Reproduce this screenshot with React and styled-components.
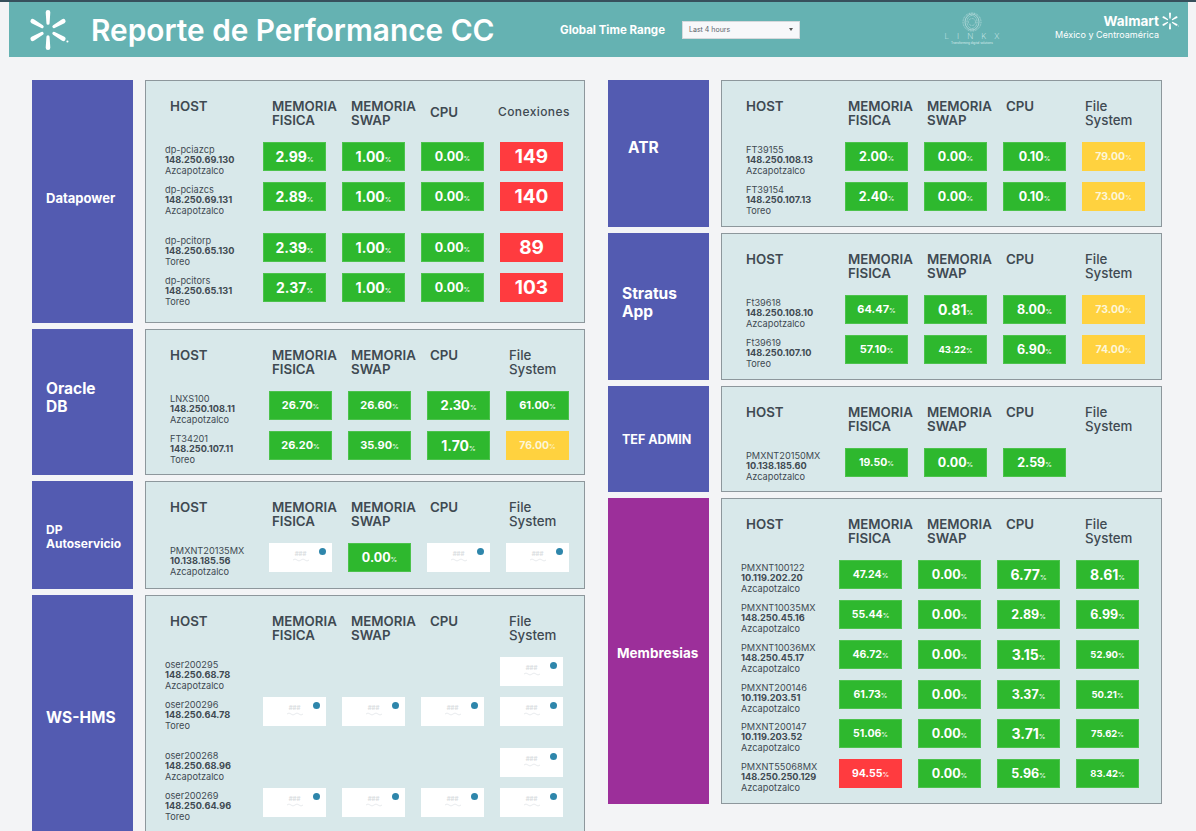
import React from "react"
import styled, { createGlobalStyle } from "styled-components"

const GREEN = "#2eb82e"
const RED = "#ff3b3f"
const YELLOW = "#ffd23f"

const g = (v, size = 14) => ({ v, size, color: GREEN })
const r = (v, size = 19) => ({ v, size, color: RED, raw: true })
const y = (v, size = 10.5) => ({ v, size, color: YELLOW })
const BLANK = { blank: true }
const EMPTY = { empty: true }

const leftSections = [
  {
    label: "Datapower", labelSize: 13, labelLeft: 14, labelShift: -3, height: 243, accent: "#535bb1", last: "Conexiones", wide: true,
    rows: [
      { name: "dp-pciazcp", ip: "148.250.69.130", site: "Azcapotzalco", cells: [g("2.99"), g("1.00"), g("0.00", 12.5), r("149")] },
      { name: "dp-pciazcs", ip: "148.250.69.131", site: "Azcapotzalco", top: 11, cells: [g("2.89"), g("1.00"), g("0.00", 12.5), r("140")] },
      { name: "dp-pcitorp", ip: "148.250.65.130", site: "Toreo", top: 22, cells: [g("2.39"), g("1.00"), g("0.00", 12.5), r("89")] },
      { name: "dp-pcitors", ip: "148.250.65.131", site: "Toreo", top: 11, cells: [g("2.37"), g("1.00"), g("0.00", 12.5), r("103")] },
    ],
  },
  {
    label: "Oracle DB", labelSize: 15.5, labelLeft: 14, labelRight: 30, labelShift: -4, height: 146, accent: "#535bb1",
    rows: [
      { name: "LNXS100", ip: "148.250.108.11", site: "Azcapotzalco", cells: [g("26.70", 11), g("26.60", 11), g("2.30", 13), g("61.00", 11)] },
      { name: "FT34201", ip: "148.250.107.11", site: "Toreo", top: 11, cells: [g("26.20", 11), g("35.90", 11), g("1.70", 14), y("76.00")] },
    ],
  },
  {
    label: "DP Autoservicio", labelSize: 12, labelLeft: 14, labelShift: 2, height: 108, accent: "#535bb1",
    rows: [
      { name: "PMXNT20135MX", ip: "10.138.185.56", site: "Azcapotzalco", cells: [BLANK, g("0.00", 12.5), BLANK, BLANK] },
    ],
  },
  {
    label: "WS-HMS", labelSize: 15.5, labelLeft: 14, labelShift: 0, height: 246, accent: "#535bb1", wide: true,
    rows: [
      { name: "oser200295", ip: "148.250.68.78", site: "Azcapotzalco", cells: [EMPTY, EMPTY, EMPTY, BLANK] },
      { name: "oser200296", ip: "148.250.64.78", site: "Toreo", top: 11, cells: [BLANK, BLANK, BLANK, BLANK] },
      { name: "oser200268", ip: "148.250.68.96", site: "Azcapotzalco", top: 22, cells: [EMPTY, EMPTY, EMPTY, BLANK] },
      { name: "oser200269", ip: "148.250.64.96", site: "Toreo", top: 11, cells: [BLANK, BLANK, BLANK, BLANK] },
    ],
  },
]

const rightSections = [
  {
    label: "ATR", labelSize: 15.5, labelLeft: 20, labelShift: -6, height: 147, accent: "#535bb1",
    rows: [
      { name: "FT39155", ip: "148.250.108.13", site: "Azcapotzalco", cells: [g("2.00", 12.5), g("0.00", 12.5), g("0.10", 12.5), y("79.00")] },
      { name: "FT39154", ip: "148.250.107.13", site: "Toreo", top: 11, cells: [g("2.40", 12.5), g("0.00", 12.5), g("0.10", 12.5), y("73.00")] },
    ],
  },
  {
    label: "Stratus App", labelSize: 15.5, labelLeft: 14, labelShift: -4, height: 147, accent: "#535bb1",
    rows: [
      { name: "Ft39618", ip: "148.250.108.10", site: "Azcapotzalco", cells: [g("64.47", 11), g("0.81", 14), g("8.00", 12.5), y("73.00")] },
      { name: "Ft39619", ip: "148.250.107.10", site: "Toreo", top: 11, cells: [g("57.10", 11), g("43.22", 9.5), g("6.90", 12.5), y("74.00")] },
    ],
  },
  {
    label: "TEF ADMIN", labelSize: 12.5, labelLeft: 14, labelShift: 1, height: 106, accent: "#535bb1",
    rows: [
      { name: "PMXNT20150MX", ip: "10.138.185.60", site: "Azcapotzalco", cells: [g("19.50", 10.5), g("0.00", 12.5), g("2.59", 12.5), EMPTY] },
    ],
  },
  {
    label: "Membresias", labelSize: 13.5, labelLeft: 9, labelShift: 3, height: 306, accent: "#9c2f9a", wide: true,
    rows: [
      { name: "PMXNT100122", ip: "10.119.202.20", site: "Azcapotzalco", cells: [g("47.24", 10.5), g("0.00", 12.5), g("6.77", 14), g("8.61", 14)] },
      { name: "PMXNT10035MX", ip: "148.250.45.16", site: "Azcapotzalco", top: 11, cells: [g("55.44", 10.5), g("0.00", 12.5), g("2.89", 12.5), g("6.99", 12.5)] },
      { name: "PMXNT10036MX", ip: "148.250.45.17", site: "Azcapotzalco", top: 11, cells: [g("46.72", 10.5), g("0.00", 12.5), g("3.15", 14), g("52.90", 9.5)] },
      { name: "PMXNT200146", ip: "10.119.203.51", site: "Azcapotzalco", top: 11, cells: [g("61.73", 10.5), g("0.00", 12.5), g("3.37", 12.5), g("50.21", 9.5)] },
      { name: "PMXNT200147", ip: "10.119.203.52", site: "Azcapotzalco", top: 10, cells: [g("51.06", 10.5), g("0.00", 12.5), g("3.71", 14), g("75.62", 9.5)] },
      { name: "PMXNT55068MX", ip: "148.250.250.129", site: "Azcapotzalco", top: 11, cells: [{ v: "94.55", size: 10.5, color: RED }, g("0.00", 12.5), g("5.96", 12.5), g("83.42", 9.5)] },
    ],
  },
]

const RAY_ANGLES = [0, 60, 120, 180, 240, 300]

const Spark = ({ size }) => (
  <svg width={size} height={size} viewBox="0 0 40 40" fill="#fff">
    {RAY_ANGLES.map((a) => (
      <path key={a} transform={`rotate(${a} 20 20)`} d="M17.800 3.200a2.200 2.200 0 0 1 4.400 0l-.7 10.300a1.500 1.500 0 0 1-3 0z" />
    ))}
    <circle cx="38.500" cy="31" r="1" />
  </svg>
)

const LinkxMark = () => (
  <svg width="20" height="20" viewBox="0 0 20 20" fill="none" stroke="#d8ecec" strokeWidth=".6">
    <circle cx="10" cy="10" r="9" strokeDasharray="1 .7" />
    <ellipse cx="10" cy="10" rx="7" ry="8" />
    <ellipse cx="10" cy="10" rx="5" ry="6.500" strokeDasharray="1 .6" />
    <circle cx="10" cy="10" r="3.500" strokeDasharray=".8 .8" />
  </svg>
)

const Wave = () => (
  <svg width="16" height="4" viewBox="0 0 16 4" fill="none" stroke="#e2e6e8" strokeWidth=".8">
    <path d="M0 2q2-2 4 0t4 0 4 0 4 0" />
  </svg>
)

const Tile = ({ cell }) => {
  if (cell.empty) return <span />
  if (cell.blank) {
    return (
      <BlankTile>
        <Dot />
        <Hashes>###</Hashes>
        <Wave />
      </BlankTile>
    )
  }
  return (
    <ValueTile $color={cell.color} $size={cell.size}>
      {cell.v}
      {!cell.raw && <small>%</small>}
    </ValueTile>
  )
}

const Section = ({ data }) => (
  <SectionRow $height={data.height}>
    <SideLabel
      $accent={data.accent}
      $size={data.labelSize}
      $left={data.labelLeft}
      $right={data.labelRight || 4}
      $shift={data.labelShift}
    >
      <span>{data.label}</span>
    </SideLabel>
    <Panel>
      <HeadRow>
        <HeadCell>HOST</HeadCell>
        <HeadCell>MEMORIA<br />FISICA</HeadCell>
        <HeadCell>MEMORIA<br />SWAP</HeadCell>
        <HeadCell $low={!!data.last}>CPU</HeadCell>
        {data.last
          ? <LastHead>{data.last}</LastHead>
          : <HeadCell $soft>File<br />System</HeadCell>}
      </HeadRow>
      {data.rows.map((row) => (
        <HostRow key={row.name} $wide={data.wide} $top={row.top || 0}>
          <HostInfo>
            {row.name}
            <b>{row.ip}</b>
            {row.site}
          </HostInfo>
          {row.cells.map((cell, i) => <Tile key={i} cell={cell} />)}
        </HostRow>
      ))}
    </Panel>
  </SectionRow>
)

const App = () => (
  <>
    <GlobalStyle />
    <TopBar>
      <LogoSlot><Spark size={42} /></LogoSlot>
      <Title>Reporte de Performance CC</Title>
      <RangeLabel>Global Time Range</RangeLabel>
      <RangeSelect>Last 4 hours<Caret /></RangeSelect>
      <Linkx>
        <LinkxMark />
        <LinkxName>LINKX</LinkxName>
        <LinkxTag>Transforming digital solutions</LinkxTag>
      </Linkx>
      <Brand>
        <BrandTop>Walmart<Spark size={18} /></BrandTop>
        <BrandSub>México y Centroamérica</BrandSub>
      </Brand>
    </TopBar>
    <Board>
      <Column>{leftSections.map((s) => <Section key={s.label} data={s} />)}</Column>
      <Column>{rightSections.map((s) => <Section key={s.label} data={s} />)}</Column>
    </Board>
  </>
)

export default App

const GlobalStyle = createGlobalStyle`
  html, body {
    margin: 0;
    height: 831px;
    overflow: hidden;
    background: #f3f4f6;
    font-family: Inter, "Liberation Sans", sans-serif;
    color: #3f4a52;
  }
  body {
    border-top: 2px solid #37505c;
    box-sizing: border-box;
  }
`

const TopBar = styled.header`
  display: flex;
  align-items: center;
  height: 55px;
  margin: 0 8px 0 9px;
  background: #65b2b2;
  color: #fff;
`

const LogoSlot = styled.div`
  display: flex;
  width: 82px;
  padding-left: 18px;
  box-sizing: border-box;
`

const Title = styled.h1`
  margin: 0;
  width: 469px;
  font-size: 29.800px;
  font-weight: 600;
  white-space: nowrap;
`

const RangeLabel = styled.span`
  font-size: 11.500px;
  font-weight: 700;
  width: 122px;
  white-space: nowrap;
`

const RangeSelect = styled.div`
  display: flex;
  align-items: center;
  justify-content: space-between;
  box-sizing: border-box;
  width: 118px;
  height: 18px;
  padding: 0 6px;
  background: #f7f8fa;
  border: 1px solid #d5d9dc;
  font-size: 7px;
  color: #5b646b;
`

const Caret = styled.i`
  width: 0;
  height: 0;
  border: 2.500px solid transparent;
  border-top: 3px solid #555;
  border-bottom: 0;
`

const Linkx = styled.div`
  display: flex;
  flex-direction: column;
  align-items: center;
  width: 62px;
  margin-left: 141px;
  padding-bottom: 3px;
  color: #d8ecec;
`

const LinkxName = styled.span`
  margin-right: -8px;
  font-size: 8px;
  font-weight: 200;
  letter-spacing: 8px;
  line-height: 9px;
`

const LinkxTag = styled.span`
  font-size: 3px;
  line-height: 4px;
  white-space: nowrap;
`

const Brand = styled.div`
  display: flex;
  flex-direction: column;
  align-items: flex-end;
  margin-left: auto;
  padding: 0 9px 7px 0;
`

const BrandTop = styled.div`
  display: flex;
  align-items: center;
  gap: 2px;
  font-size: 13.500px;
  font-weight: 700;
  line-height: 14px;
`

const BrandSub = styled.div`
  font-size: 9px;
  line-height: 10px;
  margin-right: 20px;
`

const Board = styled.main`
  display: grid;
  grid-template-columns: 553px 554px;
  column-gap: 23px;
  padding: 23px 0 0 32px;
`

const Column = styled.div`
  display: flex;
  flex-direction: column;
  gap: 6px;
`

const SectionRow = styled.section`
  display: flex;
  gap: 12px;
  height: ${(p) => p.$height}px;
`

const SideLabel = styled.div`
  display: flex;
  align-items: center;
  flex: 0 0 101px;
  box-sizing: border-box;
  padding-left: ${(p) => p.$left}px;
  padding-right: ${(p) => p.$right}px;
  padding-top: ${(p) => Math.max(p.$shift, 0) * 2}px;
  padding-bottom: ${(p) => Math.max(-p.$shift, 0) * 2}px;
  background: ${(p) => p.$accent};
  color: #fff;
  font-size: ${(p) => p.$size}px;
  font-weight: 700;
  line-height: 1.150;
`

const Panel = styled.div`
  flex: 1;
  min-width: 0;
  box-sizing: border-box;
  background: #d8e8ea;
  border: 1px solid #8d979c;
  padding-top: 18px;
`

const HeadRow = styled.div`
  display: grid;
  grid-template-columns: 102px repeat(4, 79px);
  height: 43px;
  padding-left: 24px;
`

const HeadCell = styled.div`
  margin-top: ${(p) => (p.$low ? 6 : 0)}px;
  font-size: 13.300px;
  font-weight: ${(p) => (p.$soft ? 500 : 600)};
  line-height: 14px;
  white-space: nowrap;
`

const LastHead = styled.div`
  margin: 6px 0 0 -11px;
  font-size: 12px;
  line-height: 14px;
  font-weight: 500;
  letter-spacing: .4px;
  white-space: nowrap;
`

const HostRow = styled.div`
  display: grid;
  grid-template-columns: ${(p) => (p.$wide ? "82px" : "83px")} repeat(4, 63px);
  grid-template-rows: 29px;
  column-gap: 16px;
  height: 29px;
  margin-top: ${(p) => p.$top}px;
  padding-left: ${(p) => (p.$wide ? 19 : 24)}px;
`

const HostInfo = styled.div`
  display: flex;
  flex-direction: column;
  padding-top: 3px;
  font-size: 9.200px;
  line-height: 10.300px;
  white-space: nowrap;
  b { font-weight: 700; }
`

const ValueTile = styled.div`
  display: flex;
  align-items: baseline;
  justify-content: center;
  box-sizing: border-box;
  line-height: 27px;
  background: ${(p) => p.$color};
  border: 1px solid ${(p) => (p.$color === GREEN ? "#4cc24c" : p.$color)};
  color: ${(p) => (p.$color === YELLOW ? "#fdf6d8" : "#fff")};
  font-size: ${(p) => p.$size}px;
  font-weight: 700;
  small { font-size: 6.500px; opacity: .85; }
`

const BlankTile = styled.div`
  position: relative;
  display: flex;
  flex-direction: column;
  align-items: center;
  padding-top: 7px;
  box-sizing: border-box;
  background: #fff;
`

const Dot = styled.i`
  position: absolute;
  top: 5px;
  right: 6px;
  width: 7px;
  height: 7px;
  border-radius: 50%;
  background: #2e86ab;
`

const Hashes = styled.span`
  font-size: 6px;
  line-height: 8px;
  font-weight: 700;
  color: #dde1e3;
`
